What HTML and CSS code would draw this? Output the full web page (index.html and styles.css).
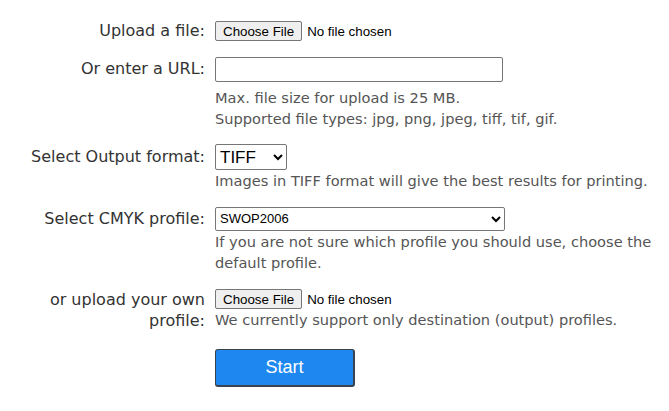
FILE: index.html
```html
<!DOCTYPE html>
<html>
<head>
<meta charset="utf-8">
<link rel="stylesheet" href="styles.css">
</head>
<body>
<form class="form">
  <div class="row r1">
    <div class="label">Upload a file:</div>
    <div class="field"><input class="file" type="file"></div>
  </div>

  <div class="row r2">
    <div class="label">Or enter a URL:</div>
    <div class="field">
      <input class="url" type="text">
      <div class="hint gap">Max. file size for upload is 25 MB.<br>Supported file types: jpg, png, jpeg, tiff, tif, gif.</div>
    </div>
  </div>

  <div class="row r3">
    <div class="label">Select Output format:</div>
    <div class="field">
      <select class="fmt"><option>TIFF</option><option>JPEG</option></select>
      <div class="hint">Images in TIFF format will give the best results for printing.</div>
    </div>
  </div>

  <div class="row r4">
    <div class="label">Select CMYK profile:</div>
    <div class="field">
      <select class="profile"><option>SWOP2006</option></select>
      <div class="hint">If you are not sure which profile you should use, choose the default profile.</div>
    </div>
  </div>

  <div class="row r5">
    <div class="label">or upload your own profile:</div>
    <div class="field">
      <input class="file" type="file">
      <div class="hint">We currently support only destination (output) profiles.</div>
    </div>
  </div>

  <div class="row r6">
    <div class="label"></div>
    <div class="field"><button type="button" class="start">Start</button></div>
  </div>
</form>
</body>
</html>
```

FILE: styles.css
```css
html, body {
  margin: 0;
  background: #fff;
}
body {
  padding: 0 8px;
  font-family: "DejaVu Sans", Verdana, sans-serif;
  color: #333;
}
.form {
  padding-top: 21px;
}
.row {
  display: flex;
  column-gap: 10px;
}
.label {
  flex: 0 0 197px;
  text-align: right;
  font-size: 16px;
  line-height: 20px;
  color: #333;
}
.field {
  flex: 0 0 450px;
  font-size: 14.6px;
}
.r2 { margin-top: 16px; }
.r2 .label { padding-top: 2px; }
.r3 { margin-top: 15.5px; }
.r3 .label { padding-top: 3px; }
.r4 { margin-top: 15.5px; }
.r4 .label { padding-top: 2px; }
.r5 { margin-top: 16.5px; }
.r5 .label { line-height: 21px; margin-top: -0.5px; }
.r6 { margin-top: 18.5px; }

.hint {
  color: #555;
  font-size: 14.6px;
  line-height: 21px;
}
.hint.gap { margin-top: 4.5px; }
.file {
  display: block;
  height: 20px;
  font-family: "Liberation Sans", Arial, sans-serif;
  font-size: 13.33px;
  color: #000;
}
.file::file-selector-button {
  font-family: "Liberation Sans", Arial, sans-serif;
  font-size: 13.33px;
  height: 20px;
  margin-right: 5px;
  padding: 1px 7px;
  background: #efefef;
  border: 1px solid #767676;
  border-radius: 2px;
  color: #000;
}
.url {
  display: block;
  width: 288px;
  height: 25px;
  box-sizing: border-box;
  border: 1px solid #767676;
  border-radius: 2px;
  font-size: 14px;
}
.fmt {
  display: block;
  width: 72px;
  height: 26px;
  font-family: "Liberation Sans", Arial, sans-serif;
  font-size: 17px;
  border: 1px solid #767676;
  border-radius: 2px;
  background: #fff;
  color: #000;
}
.profile {
  display: block;
  width: 290px;
  height: 24px;
  font-family: "Liberation Sans", Arial, sans-serif;
  font-size: 13px;
  border: 1px solid #767676;
  border-radius: 2px;
  background: #fff;
  color: #000;
}
.start {
  display: block;
  width: 140px;
  height: 38px;
  background: #1e88f0;
  color: #fff;
  font-family: "Liberation Sans", Arial, sans-serif;
  font-size: 18px;
  border: 1px solid #3a4450;
  border-bottom-width: 2px;
  border-right-width: 2px;
  border-radius: 3px;
}
```
